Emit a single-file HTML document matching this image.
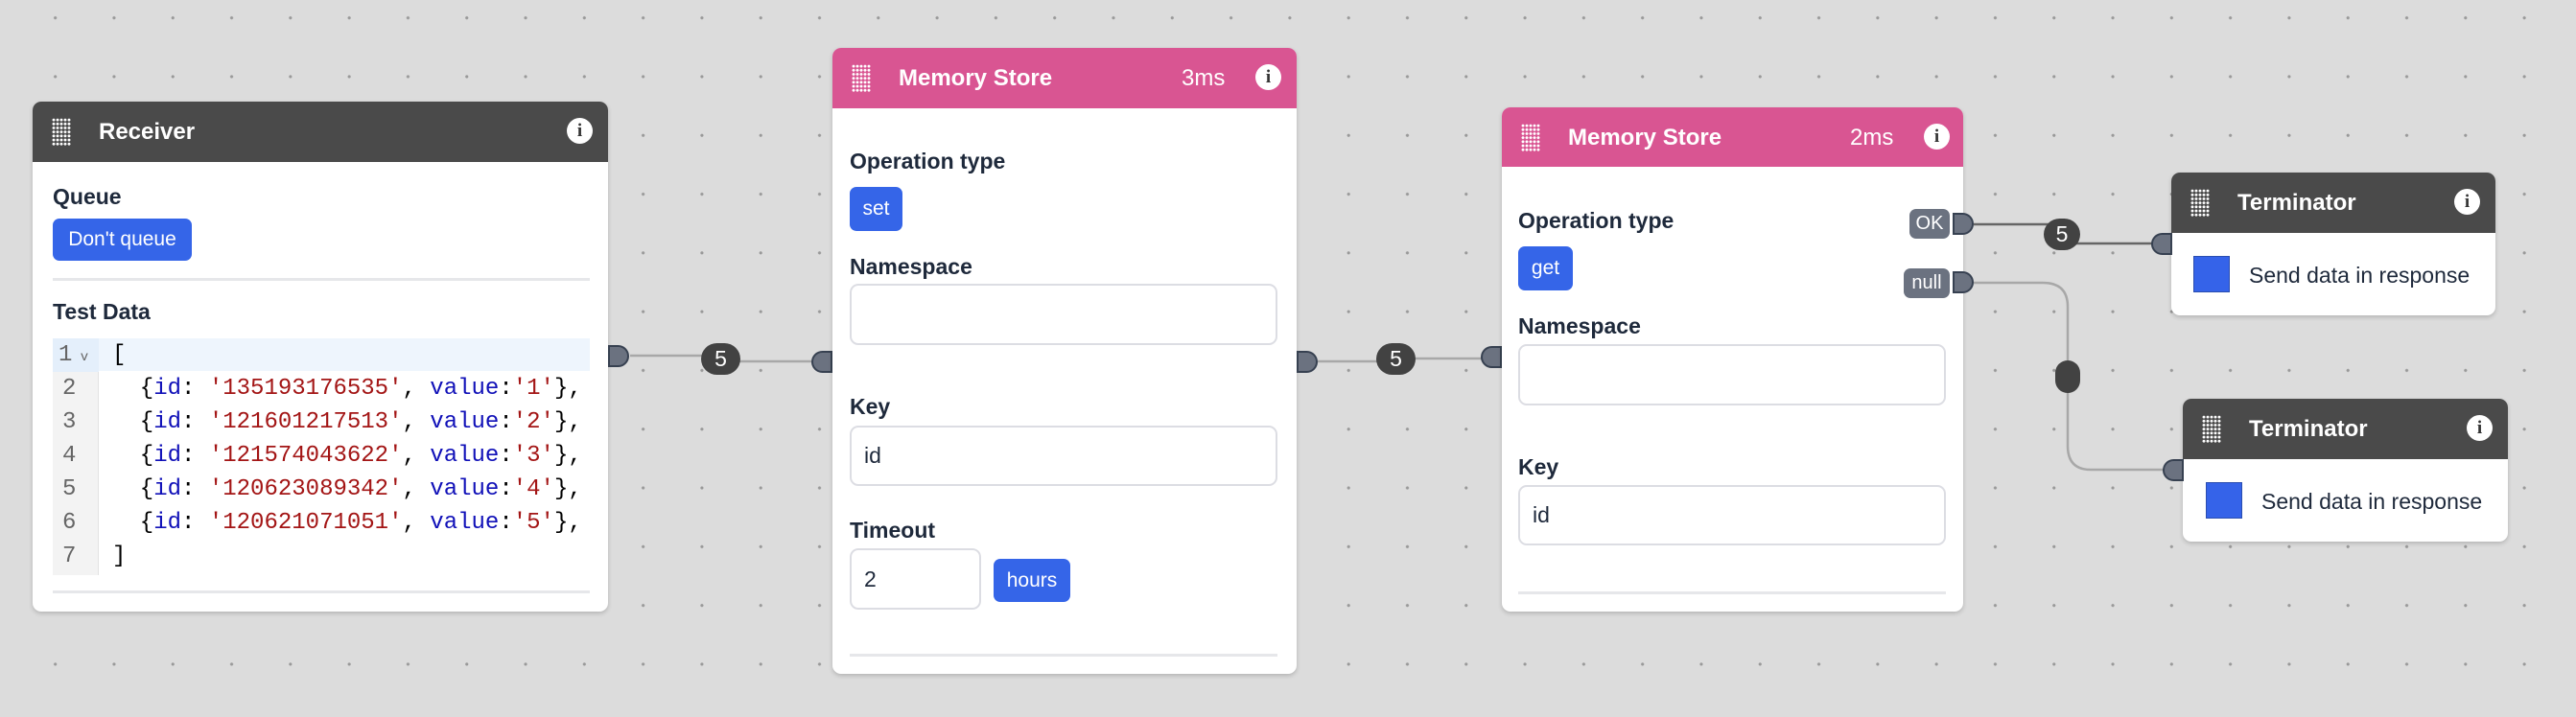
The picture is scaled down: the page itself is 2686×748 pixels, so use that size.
<!DOCTYPE html>
<html><head><meta charset="utf-8"><style>
*{box-sizing:border-box;margin:0;padding:0}
body{width:2686px;height:748px;overflow:hidden;background:#dcdcdc;font-family:"Liberation Sans",sans-serif;position:relative;
background-image:radial-gradient(circle,#999 1.4px,transparent 1.8px);background-size:61.3px 61.3px;background-position:27px -12px}
.card{position:absolute;background:#fff;border-radius:9px;box-shadow:0 2px 5px rgba(0,0,0,.18);overflow:hidden}
.hd{height:63px;position:relative;color:#fff;font-size:24px;font-weight:bold}
.dark{background:#4a4a4a}.pink{background:#d95592}
.grip{position:absolute;left:20px;top:17px;width:20px;height:29px;background-image:radial-gradient(circle,#fff 1.3px,transparent 1.6px);background-size:4px 4.2px}
.ttl{position:absolute;left:69px;top:18px}
.ms{position:absolute;top:18px;font-weight:normal}
.info{position:absolute;top:17px;width:27px;height:27px;border-radius:50%;background:#fff;color:#333;font-size:19px;font-weight:bold;text-align:center;line-height:27px;font-family:"Liberation Serif",serif}
.lbl{position:absolute;font-size:23px;font-weight:bold;color:#1e293b}
.btn{position:absolute;background:#3565e8;color:#fff;font-size:21px;border-radius:7px;text-align:center}
.inp{position:absolute;border:2px solid #dcdde3;border-radius:9px;font-size:23px;color:#1e293b;padding-left:13px}
.div{position:absolute;height:3px;background:#e6e7ea}
.h{position:absolute;width:22px;height:23px;background:#6b7280;border:2px solid #374151}
.hr{border-radius:0 12px 12px 0}.hl{border-radius:12px 0 0 12px}
.badge{position:absolute;background:#424242;color:#fff;font-size:23px;text-align:center;border-radius:17px}
.tag{position:absolute;background:#6b7280;color:#fff;font-size:20px;border-radius:7px;text-align:center}
.code{position:absolute;left:21px;top:247px;width:560px;height:247px;font-family:"Liberation Mono",monospace;font-size:24px}
.gut{position:absolute;left:0;top:0;width:48px;height:247px;background:#f3f3f3;border-right:1px solid #e2e2e2}
.ln{position:absolute;height:35px;line-height:35px;white-space:pre}
.b{color:#1010b8}.r{color:#a31515}
.sq{position:absolute;width:38px;height:38px;background:#3563e9;border:1px solid #2a4db0}
.sd{position:absolute;font-size:23px;color:#1e293b}
</style></head><body>
<svg width="2686" height="748" style="position:absolute;left:0;top:0">
<g fill="none" stroke="#a8a8a8" stroke-width="2.5">
<path d="M657 371 H740 M760 377 H846"/>
<path d="M1374 377 H1450 M1460 374 H1554"/>
<path d="M2058 234 H2140 M2160 254 H2252" stroke="#666"/>
<path d="M2058 295 H2130 Q2156 295 2156 320 V465 Q2156 490 2180 490 H2258"/>
</g></svg>

<!-- Receiver -->
<div class="card" style="left:34px;top:106px;width:600px;height:532px">
<div class="hd dark"><div class="grip"></div><div class="ttl">Receiver</div><div class="info" style="left:557px">i</div></div>
<div class="lbl" style="left:21px;top:86px">Queue</div>
<div class="btn" style="left:21px;top:122px;width:145px;height:44px;line-height:44px">Don't queue</div>
<div class="div" style="left:21px;top:184px;width:560px"></div>
<div class="lbl" style="left:21px;top:206px">Test Data</div>
<div class="code"><div class="gut"></div>
<div style="position:absolute;left:0;top:0;width:560px;height:34px;background:#eef5fd"></div>
<div class="ln" style="left:0;top:0;width:48px;background:#e4effb;color:#666;padding-left:6px">1<span style="font-size:14px"> v</span></div>
<div class="ln" style="left:10px;top:35px;color:#666">2</div><div class="ln" style="left:10px;top:70px;color:#666">3</div><div class="ln" style="left:10px;top:105px;color:#666">4</div><div class="ln" style="left:10px;top:140px;color:#666">5</div><div class="ln" style="left:10px;top:175px;color:#666">6</div><div class="ln" style="left:10px;top:210px;color:#666">7</div>
<div class="ln" style="left:62px;top:0">[</div>
<div class="ln" style="left:62px;top:35px">  {<span class="b">id</span>: <span class="r">'135193176535'</span>, <span class="b">value</span>:<span class="r">'1'</span>},</div>
<div class="ln" style="left:62px;top:70px">  {<span class="b">id</span>: <span class="r">'121601217513'</span>, <span class="b">value</span>:<span class="r">'2'</span>},</div>
<div class="ln" style="left:62px;top:105px">  {<span class="b">id</span>: <span class="r">'121574043622'</span>, <span class="b">value</span>:<span class="r">'3'</span>},</div>
<div class="ln" style="left:62px;top:140px">  {<span class="b">id</span>: <span class="r">'120623089342'</span>, <span class="b">value</span>:<span class="r">'4'</span>},</div>
<div class="ln" style="left:62px;top:175px">  {<span class="b">id</span>: <span class="r">'120621071051'</span>, <span class="b">value</span>:<span class="r">'5'</span>},</div>
<div class="ln" style="left:62px;top:210px">]</div>
</div>
<div class="div" style="left:21px;top:510px;width:560px"></div>
</div>
<div class="h hr" style="left:634px;top:360px"></div>
<div class="badge" style="left:731px;top:358px;width:41px;height:33px;line-height:33px">5</div>
<div class="h hl" style="left:846px;top:366px"></div>

<!-- Memory Store 1 -->
<div class="card" style="left:868px;top:50px;width:484px;height:653px">
<div class="hd pink"><div class="grip"></div><div class="ttl">Memory Store</div><div class="ms" style="left:364px">3ms</div><div class="info" style="left:441px">i</div></div>
<div class="lbl" style="left:18px;top:105px">Operation type</div>
<div class="btn" style="left:18px;top:145px;width:55px;height:46px;line-height:46px">set</div>
<div class="lbl" style="left:18px;top:215px">Namespace</div>
<div class="inp" style="left:18px;top:246px;width:446px;height:64px"></div>
<div class="lbl" style="left:18px;top:361px">Key</div>
<div class="inp" style="left:18px;top:394px;width:446px;height:63px;line-height:59px">id</div>
<div class="lbl" style="left:18px;top:490px">Timeout</div>
<div class="inp" style="left:18px;top:522px;width:137px;height:64px;line-height:60px">2</div>
<div class="btn" style="left:168px;top:533px;width:80px;height:45px;line-height:45px">hours</div>
<div class="div" style="left:18px;top:632px;width:446px"></div>
</div>
<div class="h hr" style="left:1352px;top:366px"></div>
<div class="badge" style="left:1435px;top:358px;width:41px;height:33px;line-height:33px">5</div>
<div class="h hl" style="left:1544px;top:361px"></div>

<!-- Memory Store 2 -->
<div class="card" style="left:1566px;top:112px;width:481px;height:526px">
<div class="hd pink" style="height:62px"><div class="grip"></div><div class="ttl">Memory Store</div><div class="ms" style="left:363px">2ms</div><div class="info" style="left:440px">i</div></div>
<div class="lbl" style="left:17px;top:105px">Operation type</div>
<div class="btn" style="left:17px;top:145px;width:57px;height:46px;line-height:46px">get</div>
<div class="lbl" style="left:17px;top:215px">Namespace</div>
<div class="inp" style="left:17px;top:247px;width:446px;height:64px"></div>
<div class="lbl" style="left:17px;top:362px">Key</div>
<div class="inp" style="left:17px;top:394px;width:446px;height:63px;line-height:59px">id</div>
<div class="div" style="left:17px;top:505px;width:446px"></div>
</div>
<div class="tag" style="left:1991px;top:218px;width:42px;height:31px;line-height:31px">OK</div>
<div class="tag" style="left:1985px;top:280px;width:48px;height:31px;line-height:31px">null</div>
<div class="h hr" style="left:2036px;top:222px"></div>
<div class="h hr" style="left:2036px;top:283px"></div>
<div class="badge" style="left:2131px;top:228px;width:38px;height:33px;line-height:33px">5</div>
<div class="badge" style="left:2143px;top:376px;width:26px;height:34px;border-radius:13px"></div>

<!-- Terminator 1 -->
<div class="card" style="left:2264px;top:180px;width:338px;height:149px">
<div class="hd dark"><div class="grip"></div><div class="ttl">Terminator</div><div class="info" style="left:295px">i</div></div>
<div class="sq" style="left:23px;top:87px"></div>
<div class="sd" style="left:81px;top:94px">Send data in response</div>
</div>
<div class="h hl" style="left:2243px;top:243px"></div>

<!-- Terminator 2 -->
<div class="card" style="left:2276px;top:416px;width:339px;height:149px">
<div class="hd dark"><div class="grip"></div><div class="ttl">Terminator</div><div class="info" style="left:296px">i</div></div>
<div class="sq" style="left:24px;top:87px"></div>
<div class="sd" style="left:82px;top:94px">Send data in response</div>
</div>
<div class="h hl" style="left:2255px;top:479px"></div>
</body></html>
